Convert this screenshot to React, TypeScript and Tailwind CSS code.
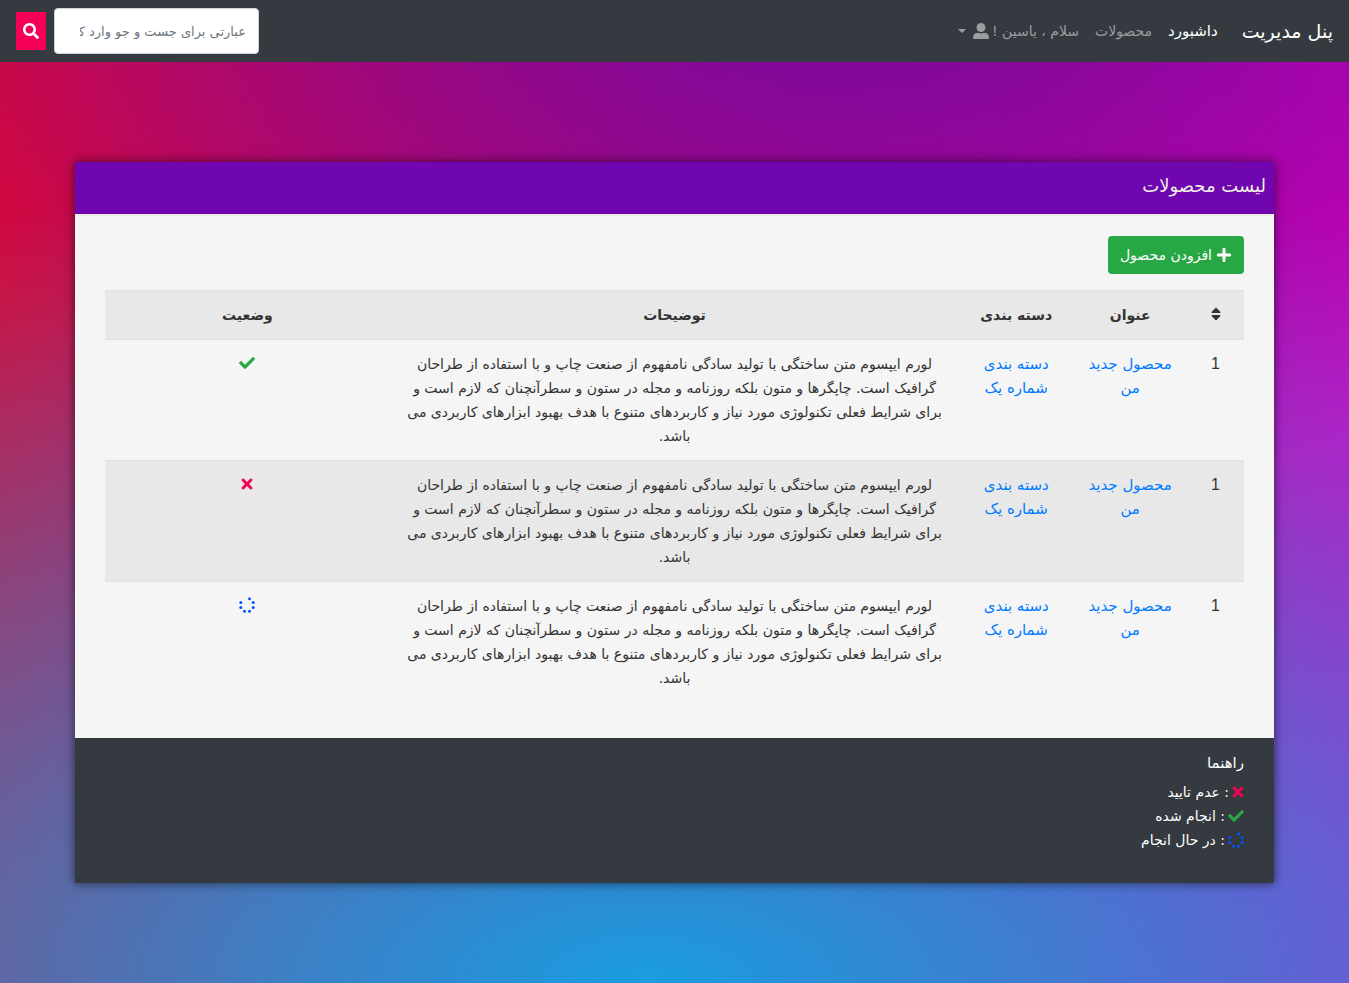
import type { ReactNode } from 'react';
import { FaCheck, FaPlus, FaSearch, FaSort, FaTimes, FaUserAlt } from 'react-icons/fa';

type Status = 'done' | 'rejected' | 'pending';

function Spinner() {
  return (
    <svg viewBox="0 0 16 16" className="inline-block size-4 align-[-2px] fill-[#0055ff]" aria-hidden="true">
      <circle cx="10.5" cy="1.7" r="1.5" />
      <circle cx="14.2" cy="5.4" r="1.5" />
      <circle cx="14.2" cy="10.4" r="1.5" />
      <circle cx="10.5" cy="14.2" r="1.5" />
      <circle cx="5.5" cy="14.2" r="1.5" />
      <circle cx="1.8" cy="10.4" r="1.5" />
      <circle cx="1.8" cy="5.4" r="1.5" />
    </svg>
  );
}

const statusIcons: Record<Status, ReactNode> = {
  done: <FaCheck className="inline-block size-4 align-[-2px] text-[#28a745]" aria-hidden="true" />,
  rejected: <FaTimes className="inline-block h-4 w-3 align-[-2px] text-[#f50057]" aria-hidden="true" />,
  pending: <Spinner />,
};

const description =
  'لورم ایپسوم متن ساختگی با تولید سادگی نامفهوم از صنعت چاپ و با استفاده از طراحان گرافیک است. چاپگرها و متون بلکه روزنامه و مجله در ستون و سطرآنچنان که لازم است و برای شرایط فعلی تکنولوژی مورد نیاز و کاربردهای متنوع با هدف بهبود ابزارهای کاربردی می باشد.';

const products: { id: number; status: Status }[] = [
  { id: 1, status: 'done' },
  { id: 2, status: 'rejected' },
  { id: 3, status: 'pending' },
];

const legend: { status: Status; label: string }[] = [
  { status: 'rejected', label: 'عدم تایید' },
  { status: 'done', label: 'انجام شده' },
  { status: 'pending', label: 'در حال انجام' },
];

function Navbar() {
  return (
    <nav className="flex items-center justify-between bg-[#343a40] px-4 py-2">
      <div className="flex items-center">
        <a href="#" className="ml-6 text-[19px] text-white">پنل مدیریت</a>
        <ul className="flex items-center gap-4 text-[#9a9da0]">
          <li><a href="#" className="text-[15px] text-white">داشبورد</a></li>
          <li><a href="#">محصولات</a></li>
          <li>
            <a href="#" className="flex items-center gap-[3px]">
              سلام ، یاسین !
              <FaUserAlt className="size-4" aria-hidden="true" />
              <span className="mr-1 border-x-4 border-t-4 border-x-transparent border-t-current" />
            </a>
          </li>
        </ul>
      </div>
      <form className="flex items-center gap-2" onSubmit={(e) => e.preventDefault()}>
        <input
          type="search"
          aria-label="جست و جو"
          placeholder="عبارتی برای جست و جو وارد کنید"
          className="h-[46px] w-[205px] rounded border border-[#ced4da] bg-white px-3 text-[13px] placeholder:text-[#6c757d]"
        />
        <button type="submit" aria-label="جست و جو" className="flex h-[38px] w-[30px] items-center justify-center bg-[#f50057] text-white">
          <FaSearch className="size-4" />
        </button>
      </form>
    </nav>
  );
}

export default function App() {
  return (
    <div
      dir="rtl"
      className="min-h-screen bg-[radial-gradient(ellipse_134%_84%_at_48%_100%,#1a9de0_0%,#1a9de000_100%),radial-gradient(ellipse_78%_50%_at_64%_0%,#78089c_0%,#78089c00_100%),linear-gradient(90deg,#d80838_0%,#b80878_50%,#d800c0_100%)] font-['DejaVu_Sans',sans-serif] text-[14px] leading-6 text-[#333]"
    >
      <Navbar />
      <main className="mx-auto mt-[100px] w-[calc(100%-150px)] bg-[#f5f5f5] shadow-[0_0_10px_rgba(0,0,0,0.6)]">
        <header className="border-b-2 border-[#f0eee4] bg-[#6f06b0] px-2 pt-3 pb-4">
          <h1 className="text-[18px] leading-6 text-[#f0eee4]">لیست محصولات</h1>
        </header>
        <div className="px-[30px] pt-5 pb-9">
          <button type="button" className="flex h-[38px] items-center gap-1 rounded bg-[#28a745] px-3 text-white">
            <FaPlus className="size-4" aria-hidden="true" />
            افزودن محصول
          </button>
          <table className="mt-4 w-full table-fixed border-collapse text-center align-top">
            <colgroup>
              <col className="w-[5%]" />
              <col className="w-[10%]" />
              <col className="w-[10%]" />
              <col className="w-[50%]" />
              <col className="w-[25%]" />
            </colgroup>
            <thead>
              <tr className="border-y border-[#dee2e6] bg-[#e8e8e8]">
                <th scope="col" aria-label="ترتیب" className="p-3"><FaSort className="inline-block size-4 align-[-2px]" /></th>
                <th scope="col" className="p-3">عنوان</th>
                <th scope="col" className="whitespace-nowrap py-3">دسته بندی</th>
                <th scope="col" className="p-3">توضیحات</th>
                <th scope="col" className="p-3">وضعیت</th>
              </tr>
            </thead>
            <tbody>
              {products.map((product) => (
                <tr key={product.id} className="border-t border-[#dee2e6] align-top even:bg-[#e8e8e8]">
                  <td className="p-3 font-['Liberation_Sans',sans-serif] text-[16px]">1</td>
                  <td className="py-3 text-[15px]"><a href="#" className="text-[#007bff]">محصول جدید<br />من</a></td>
                  <td className="py-3 text-[15px]"><a href="#" className="text-[#007bff]">دسته بندی<br />شماره یک</a></td>
                  <td className="p-3">{description}</td>
                  <td className="p-3">{statusIcons[product.status]}</td>
                </tr>
              ))}
            </tbody>
          </table>
        </div>
        <footer className="bg-[#343a40] px-[30px] pt-[13px] pb-[31px] text-white">
          <h2 className="mb-[5px] text-[15px] leading-6">راهنما</h2>
          <ul>
            {legend.map((item) => (
              <li key={item.status} className="flex items-center gap-[3px]">
                {statusIcons[item.status]}
                <span>: {item.label}</span>
              </li>
            ))}
          </ul>
        </footer>
      </main>
    </div>
  );
}
